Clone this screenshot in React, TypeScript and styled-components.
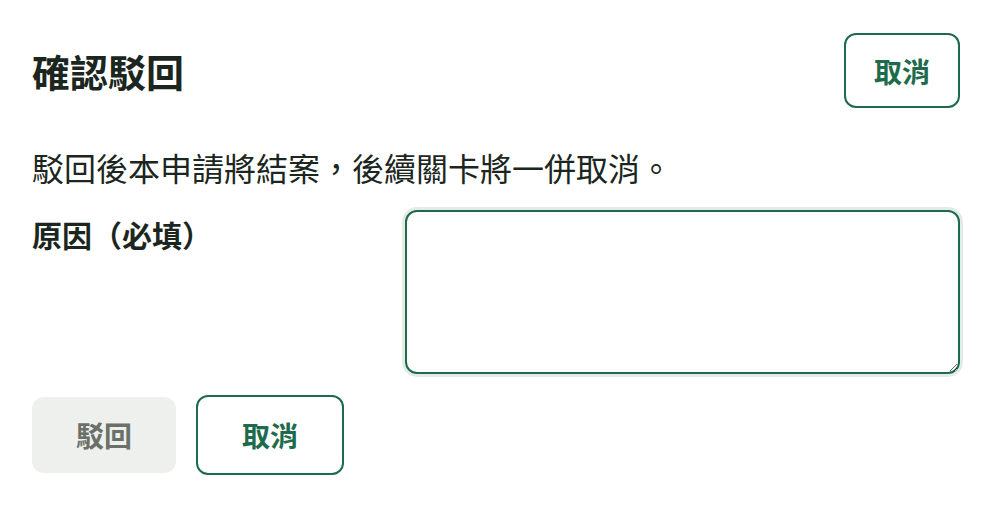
import styled, { createGlobalStyle } from 'styled-components'

const GlobalStyle = createGlobalStyle`
  body {
    margin: 0;
    background: #ffffff;
    font-family: "Noto Sans CJK TC", "Noto Sans", sans-serif;
    color: #1b2620;
  }
`

const Dialog = styled.div`
  box-sizing: border-box;
  width: 992px;
  padding: 33px 32px;
  display: flex;
  flex-direction: column;
`

const Header = styled.div`
  display: flex;
  align-items: center;
  justify-content: space-between;
`

const Title = styled.h2`
  margin: 0;
  font-size: 38px;
  font-weight: 700;
  line-height: 1.2;
`

const Message = styled.p`
  margin: 35px 0 19px;
  font-size: 32px;
  line-height: 48px;
`

const Field = styled.div`
  display: grid;
  grid-template-columns: 373px 555px;
`

const Label = styled.label`
  font-size: 30px;
  font-weight: 700;
  line-height: 48px;
`

const TextArea = styled.textarea`
  box-sizing: border-box;
  width: 555px;
  height: 164px;
  border: 2px solid #1d6b4b;
  border-radius: 12px;
  box-shadow: 0 0 0 3px #e4ebe7;
  outline: none;
  padding: 12px 16px;
  font: inherit;
  font-size: 28px;
  resize: vertical;
`

const Actions = styled.div`
  display: flex;
  align-items: center;
  gap: 20px;
  margin-top: 21px;
`

const Button = styled.button<{ $size?: 'sm' | 'lg'; $variant?: 'outline' | 'disabled' }>`
  box-sizing: border-box;
  display: inline-flex;
  align-items: center;
  justify-content: center;
  font-family: inherit;
  font-size: 28px;
  font-weight: 700;
  border-radius: 12px;
  cursor: pointer;
  padding: ${(p) => (p.$size === 'sm' ? '0 28px' : '0 44px')};
  height: ${(p) =>
    p.$size === 'sm' ? '75px' : p.$variant === 'disabled' ? '76px' : '80px'};
  background: ${(p) => (p.$variant === 'disabled' ? '#eef0ee' : '#ffffff')};
  color: ${(p) => (p.$variant === 'disabled' ? '#6b7168' : '#1d6b4b')};
  border: ${(p) => (p.$variant === 'disabled' ? 'none' : '2px solid #1d6b4b')};
  &:disabled {
    cursor: default;
  }
`

export default function App() {
  return (
    <>
      <GlobalStyle />
      <Dialog>
        <Header>
          <Title>確認駁回</Title>
          <Button $size="sm" $variant="outline">取消</Button>
        </Header>
        <Message>駁回後本申請將結案，後續關卡將一併取消。</Message>
        <Field>
          <Label htmlFor="reason">原因（必填）</Label>
          <TextArea id="reason" />
        </Field>
        <Actions>
          <Button $variant="disabled" disabled>駁回</Button>
          <Button $variant="outline">取消</Button>
        </Actions>
      </Dialog>
    </>
  )
}
